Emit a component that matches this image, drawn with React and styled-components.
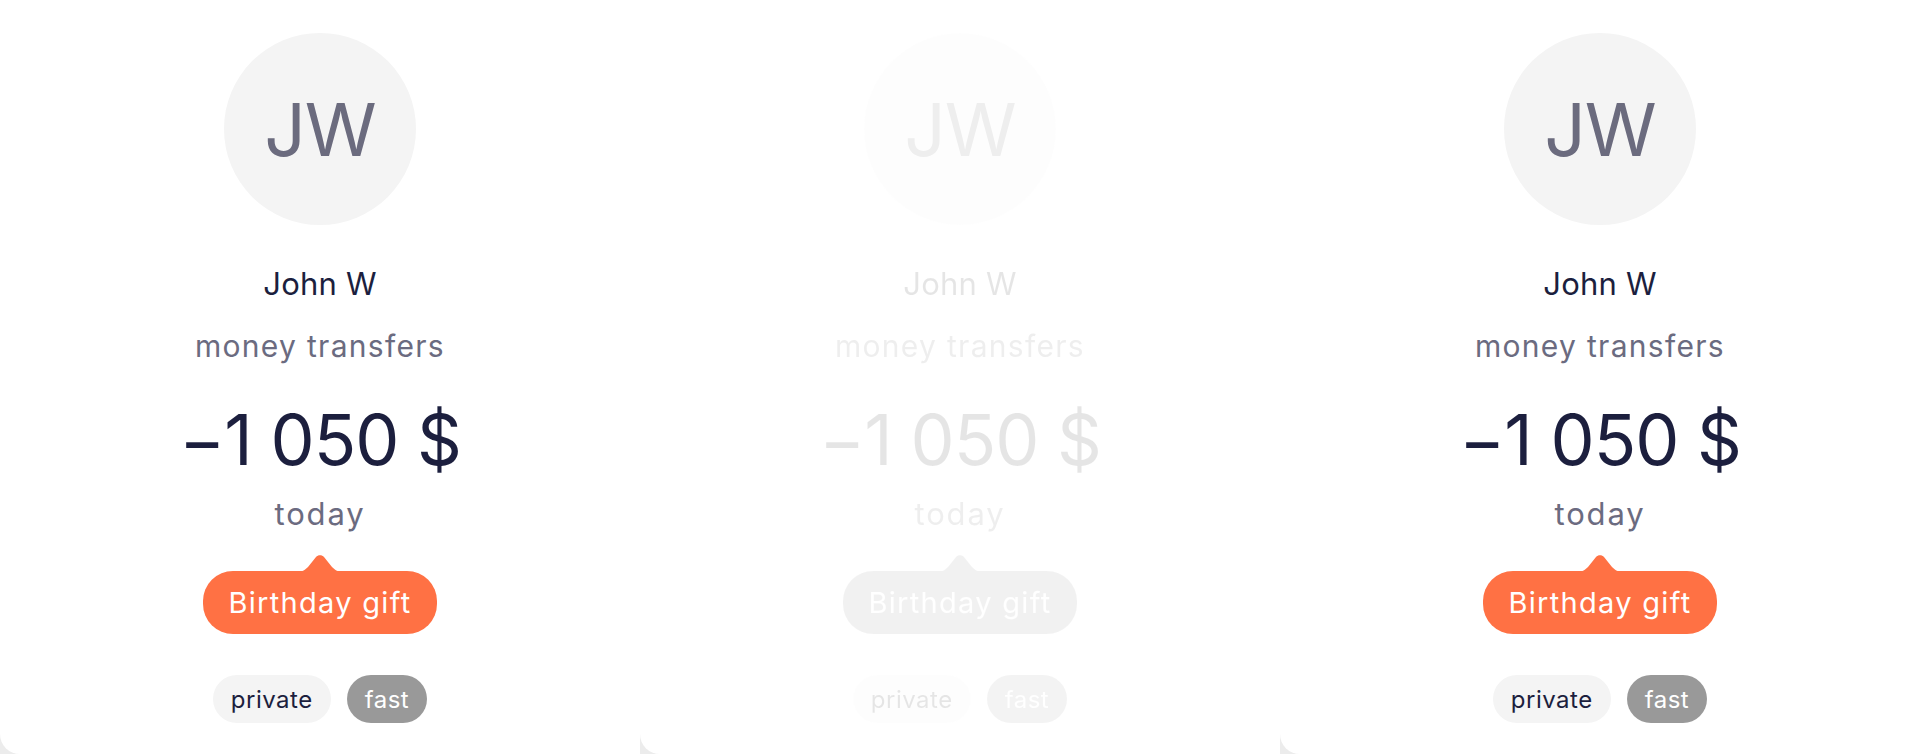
import React from 'react';
import styled, { createGlobalStyle, css } from 'styled-components';

const GlobalStyle = createGlobalStyle`
  html, body {
    margin: 0;
    padding: 0;
    background: #ececec;
    font-family: Inter, "Noto Sans", sans-serif;
  }
`;

const Row = styled.main`
  display: grid;
  grid-template-columns: repeat(3, 640px);
  height: 754px;
  overflow: hidden;
`;

const Card = styled.section`
  display: flex;
  flex-direction: column;
  align-items: center;
  background: #ffffff;
  border-radius: 0 0 0 20px;
  padding-top: 33px;
  height: 754px;
  box-sizing: border-box;
`;

const Content = styled.div`
  display: flex;
  flex-direction: column;
  align-items: center;
  ${(props) =>
    props.muted &&
    css`
      opacity: 0.11;
      filter: grayscale(1);
    `}
`;

const Avatar = styled.div`
  width: 192px;
  height: 192px;
  border-radius: 50%;
  background: #f4f4f4;
  color: #6b6b7e;
  font-size: 73px;
  font-weight: 400;
  letter-spacing: -1px;
  display: flex;
  align-items: center;
  justify-content: center;
`;

const Name = styled.h3`
  margin: 39px 0 0;
  font-size: 31px;
  line-height: 40px;
  font-weight: 400;
  color: #1c1f3e;
  letter-spacing: 0.2px;
`;

const Category = styled.p`
  margin: 22px 0 0;
  font-size: 30px;
  line-height: 40px;
  font-weight: 400;
  color: #6b6b80;
  letter-spacing: 1.3px;
`;

const Amount = styled.p`
  margin: 34px 0 0;
  font-size: 70px;
  line-height: 80px;
  font-weight: 400;
  color: #1c1f3e;
  letter-spacing: -1px;
`;

const Date = styled.p`
  margin: 14px 0 0;
  font-size: 31px;
  line-height: 40px;
  color: #6b6b80;
  letter-spacing: 1.8px;
`;

const Bubble = styled.div`
  position: relative;
  margin-top: 37px;
  height: 63px;
  padding: 0 25px;
  border-radius: 30px;
  background: #ff7144;
  color: #ffffff;
  font-size: 29px;
  letter-spacing: 1.3px;
  display: flex;
  align-items: center;
`;

const Pointer = styled.svg`
  position: absolute;
  left: 50%;
  top: -18px;
  transform: translateX(-50%);
`;

const Tags = styled.div`
  display: flex;
  gap: 16px;
  margin-top: 41px;
`;

const Tag = styled.span`
  height: 48px;
  padding: 0 18px;
  border-radius: 24px;
  display: flex;
  align-items: center;
  font-size: 24px;
  letter-spacing: 0.5px;
  background: ${(props) => (props.dark ? '#999999' : '#f4f4f4')};
  color: ${(props) => (props.dark ? '#ffffff' : '#1c1f3e')};
`;

const TransferCard = ({ muted }) => (
  <Card>
    <Content muted={muted}>
      <Avatar>JW</Avatar>
      <Name>John W</Name>
      <Category>money transfers</Category>
      <Amount>−1 050 $</Amount>
      <Date>today</Date>
      <Bubble>
        <Pointer width="48" height="19" viewBox="0 0 48 19">
          <path
            d="M0 19 C6 19 9 17 12 14 L20 4 C22 1.5 26 1.5 28 4 L36 14 C39 17 42 19 48 19 Z"
            fill="#ff7144"
          />
        </Pointer>
        Birthday gift
      </Bubble>
      <Tags>
        <Tag>private</Tag>
        <Tag dark>fast</Tag>
      </Tags>
    </Content>
  </Card>
);

export default function App() {
  return (
    <>
      <GlobalStyle />
      <Row>
        <TransferCard />
        <TransferCard muted />
        <TransferCard />
      </Row>
    </>
  );
}
